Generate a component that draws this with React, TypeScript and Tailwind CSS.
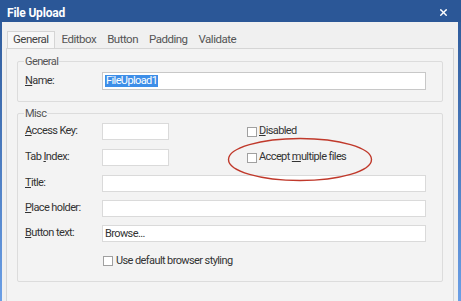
import { X } from "lucide-react";

const Label = ({ text, k }: { text: string; k: number }) => (
  <span>
    {text.slice(0, k)}
    <span className="underline underline-offset-[1px]">{text[k]}</span>
    {text.slice(k + 1)}
  </span>
);

const Box = ({ className = "" }: { className?: string }) => (
  <div className={`h-[10px] w-[10px] border border-[#a0a0a0] bg-white ${className}`} />
);

const Field = ({ label, k, value, short, extra, mt }: any) => (
  <div className={`flex items-center ${mt}`}>
    <div className="w-[77px] shrink-0">
      <Label text={label} k={k} />
    </div>
    <div
      className={`h-[17px] border border-[#dadada] bg-white px-[2px] leading-[15px] ${
        short ? "w-[67px]" : "w-[324px]"
      }`}
    >
      {value}
    </div>
    {extra}
  </div>
);

export default function App() {
  return (
    <div
      className="flex h-[301px] w-[461px] flex-col overflow-hidden bg-gradient-to-b from-[#2b5797] to-[#6b9fe6] text-[11px] text-[#333] tracking-[-0.6px]"
      style={{ fontFamily: "Roboto, 'Noto Sans', sans-serif" }}
    >
      {/* title bar */}
      <div className="flex h-[22px] shrink-0 items-center justify-between bg-[#2b5797] px-[7px] pt-[3px] text-white">
        <span className="text-[12px] font-bold tracking-[-0.2px]">File Upload</span>
        <X size={11} strokeWidth={3} className="mr-[5px]" />
      </div>

      <div className="ml-[2px] mr-[3px] flex-1 bg-[#f0f0f0] pl-[4px] pr-[4px]">
        {/* tabs */}
        <div className="flex h-[26px] items-end pl-px text-[11.5px] tracking-[-0.5px]">
          <div className="flex h-[17px] items-center border border-b-0 border-[#d5d5d5] bg-[#f7f7f7] pl-[5px] pr-[5px] text-[#444]">
            General
          </div>
          <div className="flex h-[17px] items-center gap-[11px] pl-[7px] text-[#555]">
            <span>Editbox</span>
            <span>Button</span>
            <span>Padding</span>
            <span>Validate</span>
          </div>
        </div>

        {/* tab page */}
        <div className="h-[260px] border border-[#d5d5d5] bg-[#f3f3f3] px-[10px] pt-[12px]">
          <div className="relative h-[41px] rounded-[2px] border border-[#dcdcdc] px-[7px] pt-[10px]">
            <span className="absolute -top-[8px] left-[6px] bg-[#f3f3f3] px-[1px] text-[#555]">General</span>
            <div className="flex items-center">
              <div className="w-[77px] shrink-0">
                <Label text="Name:" k={0} />
              </div>
              <div className="flex h-[18px] w-[324px] items-center border border-[#c8c8c8] bg-white px-[2px]">
                <span className="bg-[#3d8ee8] px-px leading-[12px] text-white">FileUpload1</span>
              </div>
            </div>
          </div>

          <div className="relative mt-[11px] h-[169px] rounded-[2px] border border-[#dcdcdc] px-[7px] pt-[9px]">
            <span className="absolute -top-[8px] left-[6px] bg-[#f3f3f3] px-[1px] text-[#555]">Misc</span>
            <Field
              label="Access Key:"
              k={0}
              short
              extra={
                <div className="ml-[78px] flex items-center gap-[2px]">
                  <Box />
                  <Label text="Disabled" k={0} />
                </div>
              }
            />
            <Field
              label="Tab Index:"
              k={4}
              short
              mt="mt-[9px]"
              extra={
                <div className="ml-[78px] flex items-center gap-[2px]">
                  <Box />
                  <span>
                    Accept <span className="underline underline-offset-[1px]">m</span>ultiple files
                  </span>
                </div>
              }
            />
            <Field label="Title:" k={0} mt="mt-[9px]" />
            <Field label="Place holder:" k={0} mt="mt-[8px]" />
            <Field label="Button text:" k={0} value="Browse..." mt="mt-[8px]" />
            <div className="ml-[78px] mt-[11px] flex items-center gap-[3px]">
              <Box />
              <span>Use default browser styling</span>
            </div>

            {/* red annotation ellipse */}
            <svg className="absolute left-[209px] top-[23px]" width="146" height="46" viewBox="0 0 146 46">
              <ellipse cx="73" cy="22.5" rx="71.5" ry="21" fill="none" stroke="#c0392b" strokeWidth="1.4" />
            </svg>
          </div>
        </div>
      </div>
    </div>
  );
}
